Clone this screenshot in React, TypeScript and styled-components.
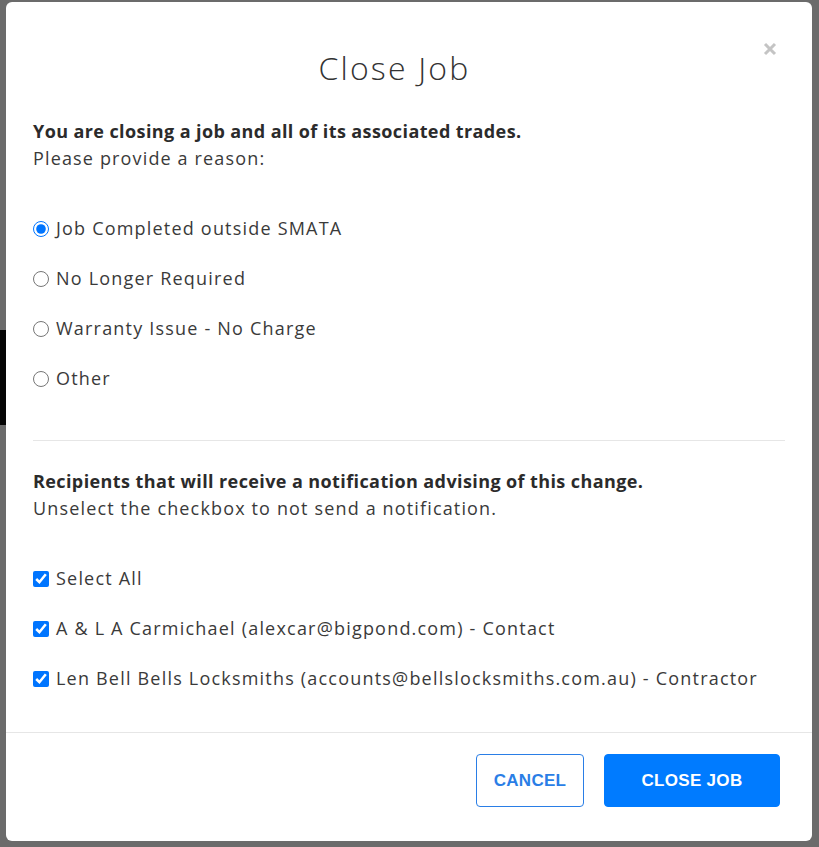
import React from "react";
import styled, { createGlobalStyle } from "styled-components";

const Global = createGlobalStyle`
  html, body { margin: 0; padding: 0; }
  body {
    font-family: "Open Sans", "DejaVu Sans", sans-serif;
    background: #6b6b6b;
  }
  * { box-sizing: border-box; }
`;

const Backdrop = styled.div`
  position: relative;
  width: 819px;
  height: 847px;
  background: #6b6b6b;
  padding: 2px 0 0 6px;
  overflow: hidden;
`;

const PageShade = styled.div`
  position: absolute;
  left: 0;
  top: 330px;
  width: 8px;
  height: 95px;
  background: #050505;
`;

const Modal = styled.div`
  position: relative;
  width: 806px;
  height: 839px;
  background: #fff;
  border-radius: 6px;
  display: flex;
  flex-direction: column;
  color: #3a3a3a;
`;

const Header = styled.div`
  padding: 47px 56px 0 27px;
  text-align: center;
`;

const Title = styled.h2`
  margin: 0;
  font-size: 32px;
  line-height: 38px;
  font-weight: 300;
  letter-spacing: 2.2px;
  color: #333;
`;

const CloseX = styled.button`
  position: absolute;
  top: 38px;
  right: 34px;
  width: 17px;
  height: 17px;
  padding: 0;
  border: 0;
  background: transparent;
  display: flex;
  align-items: center;
  justify-content: center;
`;

const Body = styled.div`
  flex: 1;
  padding: 31px 27px 0 27px;
`;

const Lead = styled.p`
  margin: 0;
  font-size: 18px;
  line-height: 27px;
  letter-spacing: 1.15px;
`;

const Strong = styled.span`
  display: block;
  font-weight: 700;
  letter-spacing: 0.4px;
  color: #2b2b2b;
`;

const OptionList = styled.div`
  display: flex;
  flex-direction: column;
  gap: 23px;
  margin-top: 43px;
`;

const Option = styled.label`
  display: flex;
  align-items: center;
  gap: 7px;
  font-size: 18px;
  line-height: 27px;
  letter-spacing: 1.2px;
  color: #3a3a3a;
`;

const Radio = styled.input.attrs({ type: "radio" })`
  width: 16px;
  height: 16px;
  margin: 0;
  accent-color: #0075ff;
`;

const Check = styled.input.attrs({ type: "checkbox" })`
  width: 16px;
  height: 16px;
  margin: 0;
  accent-color: #0075ff;
`;

const Divider = styled.hr<{ $gapTop: number; $gapBottom: number }>`
  border: 0;
  border-top: 1px solid #e6e6e6;
  margin: ${(p) => p.$gapTop}px 0 ${(p) => p.$gapBottom}px;
`;

const Footer = styled.div`
  border-top: 1px solid #e6e6e6;
  padding: 21px 32px 34px 0;
  display: flex;
  justify-content: flex-end;
  gap: 20px;
`;

const Button = styled.button<{ $primary?: boolean }>`
  height: 53px;
  padding: 0;
  width: ${(p) => (p.$primary ? "176px" : "108px")};
  border-radius: 4px;
  border: 1px solid ${(p) => (p.$primary ? "#007bff" : "#2a7ee6")};
  background: ${(p) => (p.$primary ? "#007bff" : "#fff")};
  color: ${(p) => (p.$primary ? "#fff" : "#2a7ee6")};
  font-family: "Liberation Sans", Arial, sans-serif;
  font-weight: 700;
  font-size: 17px;
  letter-spacing: 0.3px;
  text-transform: uppercase;
`;

const reasons = [
  "Job Completed outside SMATA",
  "No Longer Required",
  "Warranty Issue - No Charge",
  "Other",
];

const recipients = [
  "Select All",
  "A & L A Carmichael (alexcar@bigpond.com) - Contact",
  "Len Bell Bells Locksmiths (accounts@bellslocksmiths.com.au) - Contractor",
];

export default function App() {
  return (
    <>
      <Global />
      <Backdrop>
        <PageShade />
        <Modal>
          <Header>
            <Title>Close Job</Title>
          </Header>
          <CloseX aria-label="Close">
            <svg width="14" height="14" viewBox="0 0 14 14">
              <path d="M2 2 L12 12 M12 2 L2 12" stroke="#c4c4c4" strokeWidth="3" strokeLinecap="butt" />
            </svg>
          </CloseX>
          <Body>
            <Lead>
              <Strong>You are closing a job and all of its associated trades.</Strong>
              Please provide a reason:
            </Lead>
            <OptionList>
              {reasons.map((r, i) => (
                <Option key={r}>
                  <Radio name="reason" defaultChecked={i === 0} />
                  {r}
                </Option>
              ))}
            </OptionList>
            <Divider $gapTop={48} $gapBottom={27} />
            <Lead>
              <Strong>Recipients that will receive a notification advising of this change.</Strong>
              Unselect the checkbox to not send a notification.
            </Lead>
            <OptionList>
              {recipients.map((r) => (
                <Option key={r}>
                  <Check defaultChecked />
                  {r}
                </Option>
              ))}
            </OptionList>
          </Body>
          <Footer>
            <Button>Cancel</Button>
            <Button $primary>Close Job</Button>
          </Footer>
        </Modal>
      </Backdrop>
    </>
  );
}
